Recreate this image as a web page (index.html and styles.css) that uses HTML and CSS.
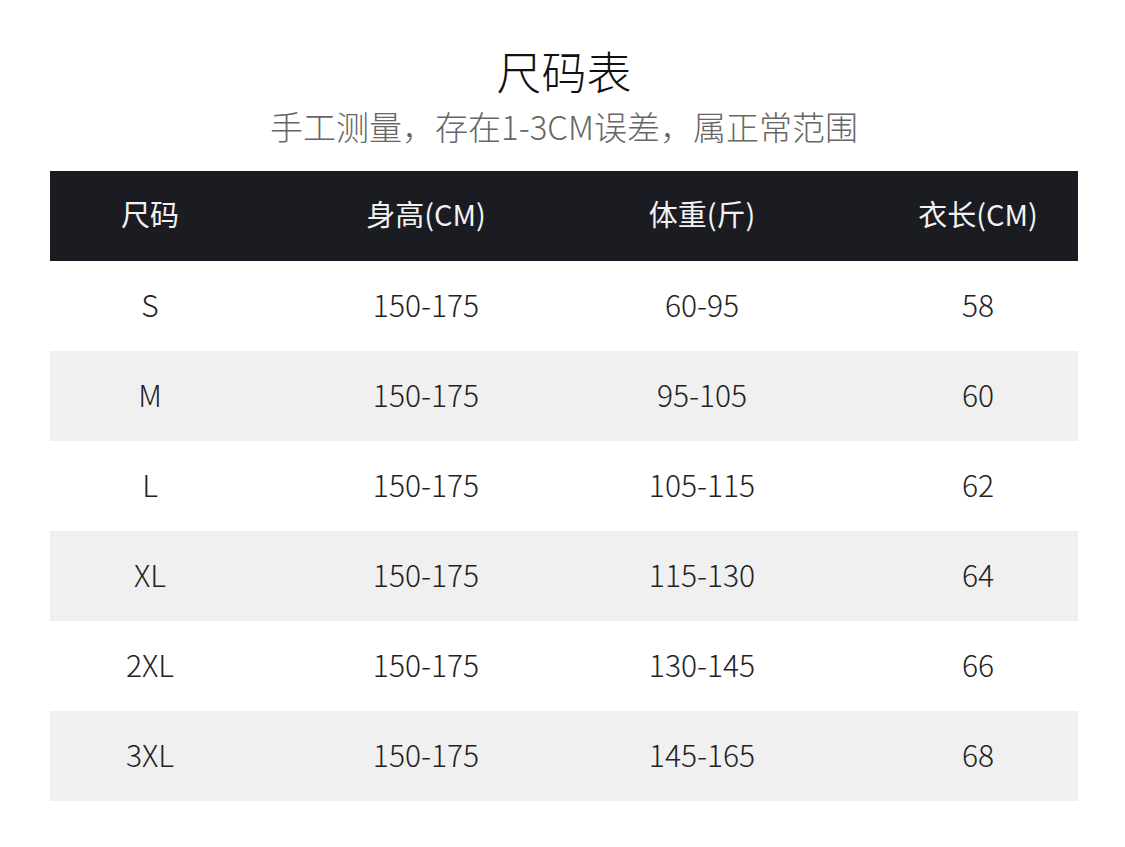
FILE: index.html
```html
<!DOCTYPE html>
<html lang="zh-CN">
<head>
<meta charset="utf-8">
<title>尺码表</title>
<link rel="stylesheet" href="styles.css">
</head>
<body>
<div class="page">
  <h1 class="title">尺码表</h1>
  <p class="subtitle">手工测量，存在1-3CM误差，属正常范围</p>
  <div class="table">
    <div class="row head"><span>尺码</span><span>身高(CM)</span><span>体重(斤)</span><span>衣长(CM)</span></div>
    <div class="row"><span>S</span><span>150-175</span><span>60-95</span><span>58</span></div>
    <div class="row alt"><span>M</span><span>150-175</span><span>95-105</span><span>60</span></div>
    <div class="row"><span>L</span><span>150-175</span><span>105-115</span><span>62</span></div>
    <div class="row alt"><span>XL</span><span>150-175</span><span>115-130</span><span>64</span></div>
    <div class="row"><span>2XL</span><span>150-175</span><span>130-145</span><span>66</span></div>
    <div class="row alt"><span>3XL</span><span>150-175</span><span>145-165</span><span>68</span></div>
  </div>
</div>
</body>
</html>
```
FILE: styles.css
```css
* { box-sizing: border-box; }
html, body { margin: 0; padding: 0; background: #fff; }
body { font-family: "Noto Sans CJK SC", "Noto Sans", sans-serif; color: #222; }
.page { width: 1125px; height: 847px; padding: 41px 47px 0 50px; }
.title { margin: 0; text-align: center; font-size: 45px; font-weight: 300; line-height: 60px; color: #111; }
.subtitle { margin: 0; text-align: center; font-size: 33px; font-weight: 300; line-height: 50px; color: #666; }
.table { margin-top: 20px; width: 1028px; }
.row { display: grid; grid-template-columns: repeat(4, 200px); column-gap: 76px; height: 90px; padding-bottom: 4px; align-items: center; font-size: 30px; font-weight: 300; color: #222; }
.row span { text-align: center; }
.row.head { background: #1b1b22; color: #f2f2f2; font-weight: 400; font-size: 29px; padding-bottom: 6px; }
.row.alt { background: #f0f0f0; }
```
